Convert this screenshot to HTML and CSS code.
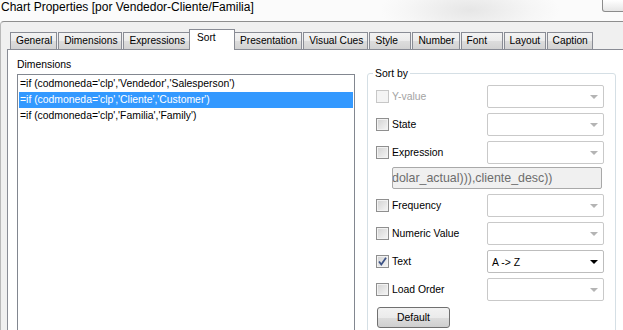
FILE: index.html
```html
<!DOCTYPE html>
<html lang="en">
<head>
    <meta charset="UTF-8">
    <meta name="viewport" content="width=device-width, initial-scale=1.0">
    <title>Chart Properties</title>
    <link rel="stylesheet" href="styles.css">
</head>
<body>
    <div class="window">
        <div class="titlebar">
            <span class="title">Chart Properties [por Vendedor-Cliente/Familia]</span>
            <div class="close-btn"></div>
        </div>

        <div class="dialog">
            <div class="tabs">
                <div class="tab">General</div>
                <div class="tab">Dimensions</div>
                <div class="tab">Expressions</div>
                <div class="tab active">Sort</div>
                <div class="tab">Presentation</div>
                <div class="tab">Visual Cues</div>
                <div class="tab">Style</div>
                <div class="tab">Number</div>
                <div class="tab">Font</div>
                <div class="tab">Layout</div>
                <div class="tab">Caption</div>
            </div>

            <div class="panel">
                <div class="dims">
                    <div class="dims-label">Dimensions</div>
                    <div class="listbox">
                        <div class="list-row">=if (codmoneda='clp','Vendedor','Salesperson')</div>
                        <div class="list-row selected">=if (codmoneda='clp','Cliente','Customer')</div>
                        <div class="list-row">=if (codmoneda='clp','Familia','Family')</div>
                    </div>
                </div>

                <fieldset class="sortby">
                    <legend>Sort by</legend>
                    <div class="sort-rows">
                        <div class="sort-row">
                            <label class="opt disabled"><span class="check"></span>Y-value</label>
                            <div class="combo"><span class="arrow"></span></div>
                        </div>
                        <div class="sort-row">
                            <label class="opt"><span class="check"></span>State</label>
                            <div class="combo"><span class="arrow"></span></div>
                        </div>
                        <div class="sort-row">
                            <label class="opt"><span class="check"></span>Expression</label>
                            <div class="combo"><span class="arrow"></span></div>
                        </div>
                        <div class="expr-box">dolar_actual))),cliente_desc))</div>
                        <div class="sort-row">
                            <label class="opt"><span class="check"></span>Frequency</label>
                            <div class="combo"><span class="arrow"></span></div>
                        </div>
                        <div class="sort-row">
                            <label class="opt"><span class="check"></span>Numeric Value</label>
                            <div class="combo"><span class="arrow"></span></div>
                        </div>
                        <div class="sort-row">
                            <label class="opt"><span class="check checked">
                                <svg width="11" height="11" viewBox="0 0 11 11"><path d="M2 5.5 L4.3 8.5 L9 1.8" fill="none" stroke="#3d5386" stroke-width="1.8"/></svg>
                            </span>Text</label>
                            <div class="combo enabled"><span class="combo-text">A -&gt; Z</span><span class="arrow"></span></div>
                        </div>
                        <div class="sort-row">
                            <label class="opt"><span class="check"></span>Load Order</label>
                            <div class="combo"><span class="arrow"></span></div>
                        </div>
                        <button type="button" class="default-button">Default</button>
                    </div>
                </fieldset>
            </div>
        </div>
    </div>
</body>
</html>
```

FILE: styles.css
```css
body {
    margin: 0;
    font-family: "Liberation Sans", Arial, sans-serif;
    font-size: 10.4px;
    color: #000;
    background-color: #fff;
}

.window {
    width: 623px;
    height: 330px;
    overflow: hidden;
    display: flex;
    flex-direction: column;
}

.titlebar {
    height: 21px;
    flex-shrink: 0;
    display: flex;
    justify-content: space-between;
    align-items: flex-start;
    background: radial-gradient(ellipse 90px 30px at 470px 10px, #e6e6e6, #f6f6f6 70%, #fbfbfb);
}

.title {
    font-size: 12px;
    line-height: 14px;
    padding-left: 1px;
}

.close-btn {
    width: 24px;
    height: 11px;
    margin-right: -5px;
    border: 1px solid #8c8c8c;
    border-top: none;
    border-bottom-left-radius: 3px;
    background: linear-gradient(#ffffff, #e6e6e6);
}

.dialog {
    flex: 1;
    display: flex;
    flex-direction: column;
    background-color: #f0f0f0;
    border-top: 1px solid #8e8e8e;
    border-left: 1px solid #b8b8b8;
    border-top-left-radius: 4px;
}

.tabs {
    height: 27px;
    flex-shrink: 0;
    display: flex;
    align-items: flex-end;
    gap: 1px;
    padding-left: 9px;
    font-size: 10.2px;
}

.tab {
    box-sizing: border-box;
    height: 17px;
    min-width: 42px;
    line-height: 16px;
    padding: 0 4px 0 5px;
    border: 1px solid #898c95;
    border-bottom: none;
    background: linear-gradient(#f3f3f3, #ebebeb 50%, #dddddd 50%, #d2d2d2);
    white-space: nowrap;
}

.tab.active {
    position: relative;
    z-index: 1;
    height: 21px;
    min-width: 46px;
    margin: 0 -2px -1px;
    padding-left: 7px;
    background: #fff;
}

.panel {
    flex: 1;
    display: flex;
    gap: 12px;
    margin-left: 6px;
    padding: 8px 0 0 9px;
    background-color: #fff;
    border-top: 1px solid #898c95;
    border-left: 1px solid #898c95;
}

.dims-label {
    line-height: 13px;
}

.listbox {
    box-sizing: border-box;
    width: 338px;
    height: 270px;
    margin-top: 3px;
    padding: 1px;
    border: 1px solid #828790;
}

.list-row {
    height: 16px;
    line-height: 16px;
    padding-left: 1px;
    white-space: nowrap;
}

.list-row.selected {
    background-color: #3399ff;
    color: #fff;
}

.sortby {
    box-sizing: border-box;
    width: 249px;
    min-width: 0;
    height: 290px;
    margin: 9px 0 0;
    padding: 0;
    border: 1px solid #d5dfe5;
    border-radius: 3px;
}

.sortby legend {
    margin-left: 5px;
    padding: 0 2px;
    line-height: 13px;
}

.sort-rows {
    display: flex;
    flex-direction: column;
    gap: 5px;
    padding: 5px 11px 0 8px;
}

.sort-row {
    display: flex;
    align-items: center;
    height: 23px;
}

.opt {
    width: 111px;
    display: flex;
    align-items: center;
    gap: 3px;
    white-space: nowrap;
}

.opt.disabled {
    color: #a3a3a3;
}

.check {
    box-sizing: border-box;
    width: 13px;
    height: 13px;
    border: 1px solid #8f8f8f;
    background: linear-gradient(135deg, #d2d2d2, #f6f6f6);
    box-shadow: inset 0 0 0 1px #f2f2f2;
    display: flex;
    align-items: center;
    justify-content: center;
}

.opt.disabled .check {
    border-color: #c7c7c7;
    background: #f4f4f4;
    box-shadow: none;
}

.check svg {
    display: block;
}

.combo {
    box-sizing: border-box;
    width: 117px;
    height: 23px;
    display: flex;
    align-items: center;
    justify-content: space-between;
    padding: 1px 5px 0 4px;
    border: 1px solid #c9c9c9;
    border-radius: 2px;
    background-color: #fff;
}

.combo.enabled {
    border-color: #bdbdbd;
}

.arrow {
    margin-left: auto;
    width: 0;
    height: 0;
    border-left: 4px solid transparent;
    border-right: 4px solid transparent;
    border-top: 4px solid #b4b4b4;
}

.combo.enabled .arrow {
    border-top-color: #000;
}

.expr-box {
    box-sizing: border-box;
    width: 210px;
    height: 22px;
    margin: -2px 0 0 16px;
    padding-left: 1px;
    line-height: 20px;
    font-size: 12.4px;
    color: #6d6d6d;
    background-color: #f0f0f0;
    border: 1px solid #a9a9a9;
    border-radius: 2px;
    white-space: nowrap;
    overflow: hidden;
    text-indent: -2px;
}

.default-button {
    box-sizing: border-box;
    width: 73px;
    height: 21px;
    margin: 1px 0 0 1px;
    padding: 0;
    font-family: inherit;
    font-size: 10.4px;
    color: #000;
    border: 1px solid #707070;
    border-radius: 3px;
    background: linear-gradient(#f2f2f2, #ebebeb 50%, #dddddd 50%, #cfcfcf);
}
```
